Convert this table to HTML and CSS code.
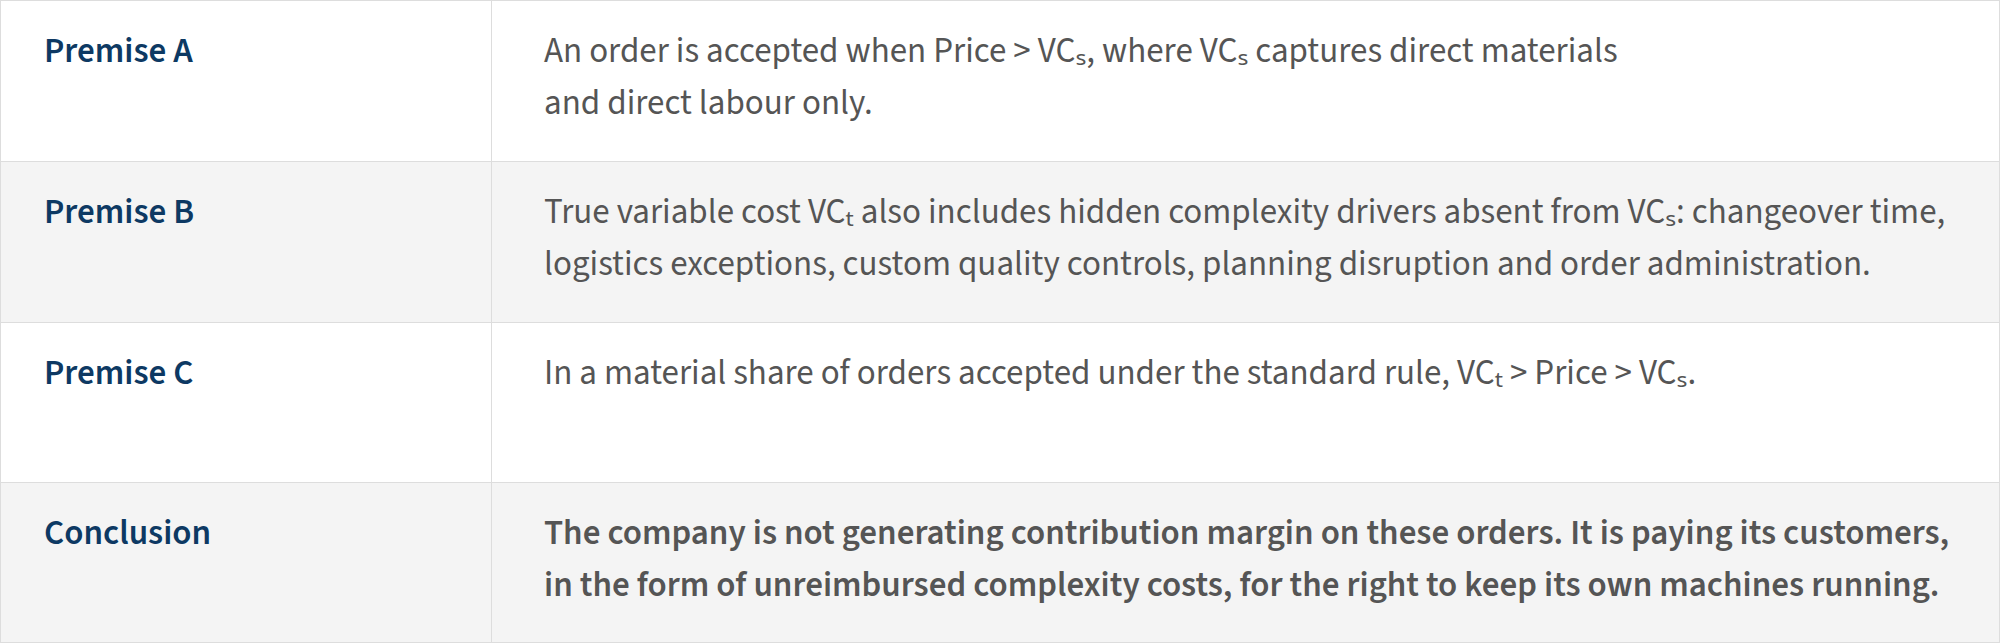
FILE: index.html
```html
<!DOCTYPE html>
<html lang="en">
<head>
<meta charset="utf-8">
<title>Argument structure</title>
<link rel="stylesheet" href="styles.css">
</head>
<body>
<div class="argument">
  <div class="row">
    <div class="label">Premise A</div>
    <div class="text">An order is accepted when Price &gt; VCₛ, where VCₛ captures direct materials<br>and direct labour only.</div>
  </div>
  <div class="row row-alt">
    <div class="label">Premise B</div>
    <div class="text">True variable cost VCₜ also includes hidden complexity drivers absent from VCₛ: changeover time, logistics exceptions, custom quality controls, planning disruption and order administration.</div>
  </div>
  <div class="row">
    <div class="label">Premise C</div>
    <div class="text">In a material share of orders accepted under the standard rule, VCₜ &gt; Price &gt; VCₛ.</div>
  </div>
  <div class="row row-alt">
    <div class="label">Conclusion</div>
    <div class="text text-strong">The company is not generating contribution margin on these orders. It is paying its customers, in the form of unreimbursed complexity costs, for the right to keep its own machines running.</div>
  </div>
</div>
</body>
</html>
```
FILE: styles.css
```css
html, body {
  margin: 0;
  padding: 0;
  background: #ffffff;
}

body {
  font-family: "Source Sans 3", "Source Sans Pro", "Lato", "Noto Sans", sans-serif;
  font-size: 35px;
  line-height: 52px;
  color: #555555;
}

.argument {
  width: 2000px;
  height: 643px;
  box-sizing: border-box;
  border: 1px solid #dddddd;
  display: grid;
  grid-template-rows: repeat(4, 1fr);
}

.row {
  display: grid;
  grid-template-columns: 491px 1fr;
  background: #ffffff;
}

.row + .row {
  border-top: 1px solid #dddddd;
}

.row-alt {
  background: #f4f4f4;
}

.label {
  border-right: 1px solid #dddddd;
  padding: 24px 40px 0 43px;
  font-weight: 600;
  color: #0d3963;
}

.text {
  padding: 24px 40px 0 52px;
}

.text-strong {
  font-weight: 600;
}
```
